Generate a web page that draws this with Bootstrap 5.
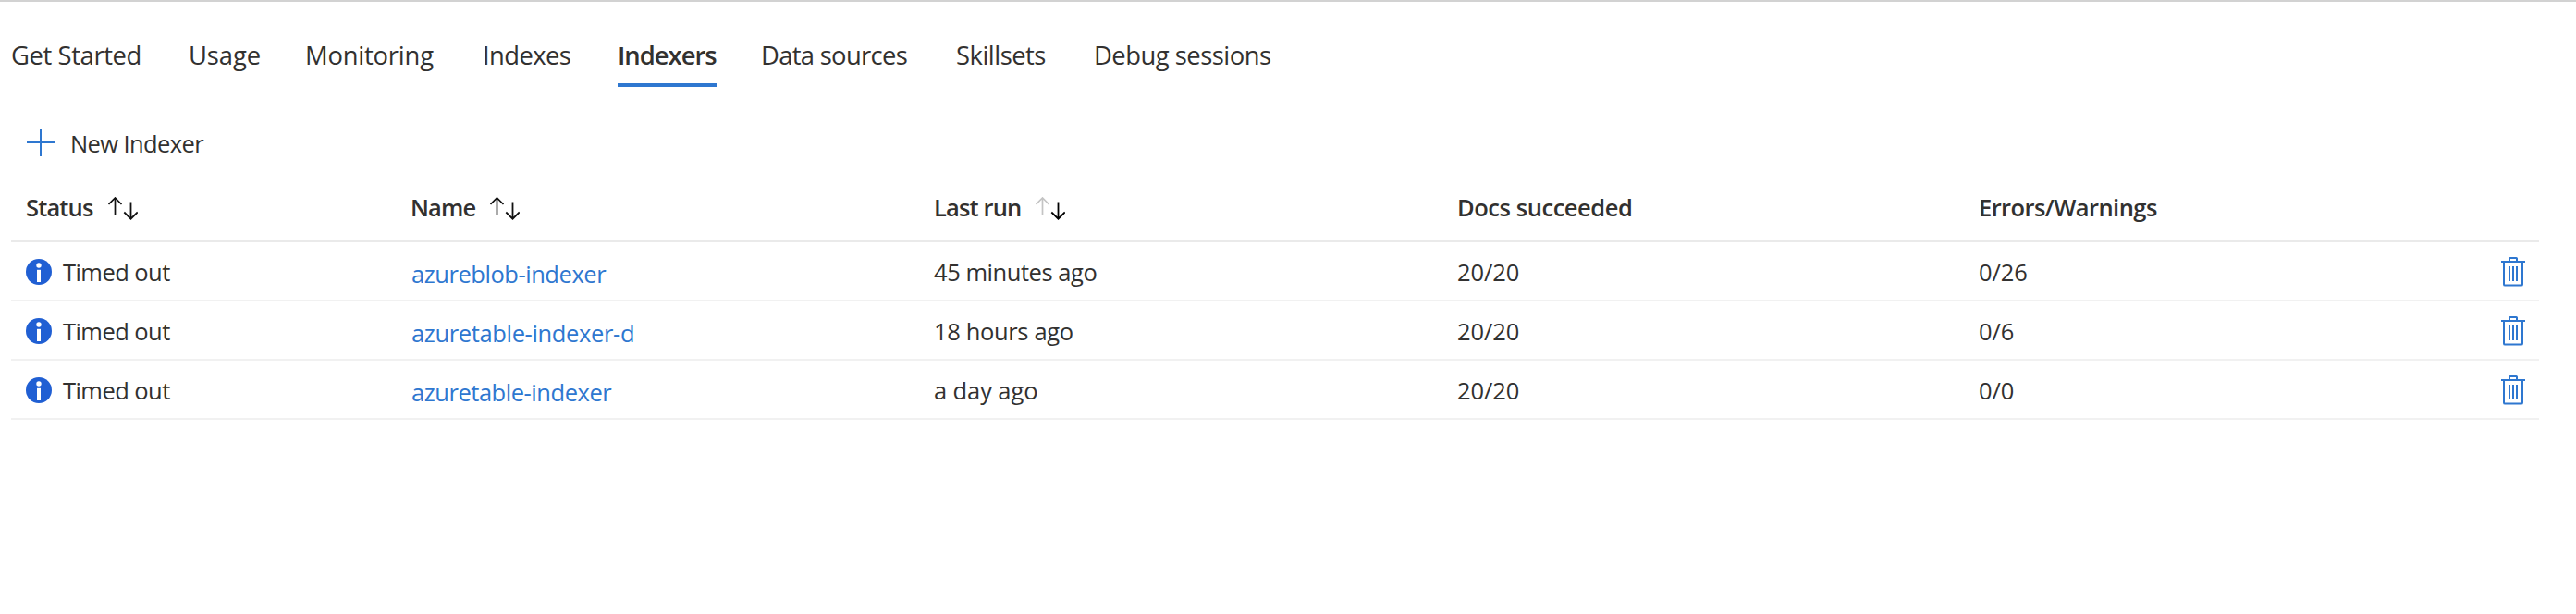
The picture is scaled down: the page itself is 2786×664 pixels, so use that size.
<!DOCTYPE html>
<html lang="en">
<head>
<meta charset="utf-8">
<title>Search service - Indexers</title>
<link href="https://cdn.jsdelivr.net/npm/bootstrap@5.3.0/dist/css/bootstrap.min.css" rel="stylesheet">
<style>
body{font-family:"Open Sans","Noto Sans",sans-serif;font-size:25.5px;line-height:36px;letter-spacing:-.45px;color:#323130;background:#fff;border-top:2px solid #d2d2d2;white-space:nowrap}
svg{display:block;flex:none}
.svc-tabs{padding:38px 0 0 12px;font-size:27.4px;display:grid;grid-template-columns:192px 126px 192px 145px 156px 211px 149px auto;justify-content:start}
.svc-tabs .nav-link{padding:0;height:54px;line-height:39px;color:#323130;letter-spacing:var(--ls)}
.svc-tabs .nav-link.active{font-weight:600;width:107px;margin-left:1px;border-bottom:4px solid #2e77d0}
.svc-toolbar{height:60px;margin-top:30px;padding-left:29px;gap:17px;letter-spacing:-.6px}
.svc-toolbar button{color:inherit;font:inherit;letter-spacing:inherit;padding:2px 0 0}
.indexers{width:2734px;margin:2px 0 0 12px;table-layout:fixed;border-collapse:separate;border-spacing:0}
.indexers th,.indexers td{padding:2px 15px 0 16px;vertical-align:middle;border-bottom:2px solid #f1f1f1}
.indexers th{height:76px;font-weight:600;border-color:#eaeaea}
.indexers td{height:64px}
.indexers td:nth-child(2){padding:6px 0 0 17px}
.indexers td:last-child{padding-top:1px}
.indexers a{color:#2e77d0;text-decoration:none}
.status-cell{gap:12px}
.sort-icon{margin:3px 0 0 16px}
.ls-0{letter-spacing:-.1px}
.ls-1{letter-spacing:-.35px}
.ls-2{letter-spacing:-.56px}
.ls-3{letter-spacing:-.85px}
</style>
</head>
<body>
<svg class="d-none">
  <symbol id="info" viewBox="0 0 28 28"><circle cx="14" cy="14" r="14" fill="#205fd3"/><circle cx="14" cy="7" r="2.7" fill="#fff"/><path d="M12 11.800h4V25h-4z" fill="#fff"/></symbol>
  <symbol id="trash" viewBox="0 0 26 32"><g fill="none" stroke="#2e77d0" stroke-width="2"><path d="M0 5h26M9 5V1.600q0-.6.6-.6h6.800q.6 0 .6.6V5M3 5v24.400q0 1.200 1.200 1.200h17.600q1.200 0 1.200-1.200V5M9 10v16M13 10v16M17 10v16"/></g></symbol>
  <symbol id="up" viewBox="0 0 32 26"><path d="M7.500 19V1M.5 8l7-7 7 7" fill="none" stroke="currentColor" stroke-width="1.700"/></symbol>
  <symbol id="down" viewBox="0 0 32 26"><path d="M24.500 5.500v18M17.300 16.500l7.200 7.200 7.200-7.200" fill="none" stroke="currentColor" stroke-width="1.800"/></symbol>
</svg>
<nav class="nav svc-tabs">
  <a class="nav-link" style="--ls:-.4px">Get Started</a>
  <a class="nav-link" style="--ls:-.1px">Usage</a>
  <a class="nav-link" style="--ls:-.2px">Monitoring</a>
  <a class="nav-link" style="--ls:-.6px">Indexes</a>
  <a class="nav-link active" style="--ls:-1px">Indexers</a>
  <a class="nav-link" style="--ls:-.69px">Data sources</a>
  <a class="nav-link" style="--ls:-.5px">Skillsets</a>
  <a class="nav-link" style="--ls:-.5px">Debug sessions</a>
</nav>
<div class="svc-toolbar d-flex align-items-center">
  <svg width="30" height="30"><path d="M0 15h30M15 0v30" stroke="#2e77d0" stroke-width="2"/></svg>
  <button class="btn border-0">New Indexer</button>
</div>
<table class="indexers">
  <colgroup><col style="width:416px"><col style="width:566px"><col style="width:566px"><col style="width:564px"><col style="width:516px"><col></colgroup>
  <thead>
    <tr>
      <th><div class="d-flex align-items-center"><span class="ls-3">Status</span><svg class="sort-icon" width="32" height="26" color="#111"><use href="#up"/><use href="#down"/></svg></div></th>
      <th><div class="d-flex align-items-center"><span class="ls-3">Name</span><svg class="sort-icon" width="32" height="26" color="#111"><use href="#up"/><use href="#down"/></svg></div></th>
      <th><div class="d-flex align-items-center"><span class="ls-3">Last run</span><svg class="sort-icon" width="32" height="26" color="#000"><use href="#up" color="#c4c4c4"/><use href="#down"/></svg></div></th>
      <th>Docs succeeded</th>
      <th class="ls-2">Errors/Warnings</th>
      <th></th>
    </tr>
  </thead>
  <tbody>
    <tr>
      <td><div class="status-cell d-flex align-items-center"><svg width="28" height="28"><use href="#info"/></svg><span class="ls-2">Timed out</span></div></td>
      <td><a href="#">azureblob-indexer</a></td>
      <td>45 minutes ago</td><td class="ls-0">20/20</td><td class="ls-0">0/26</td>
      <td><svg class="ms-auto" width="26" height="32"><use href="#trash"/></svg></td>
    </tr>
    <tr>
      <td><div class="status-cell d-flex align-items-center"><svg width="28" height="28"><use href="#info"/></svg><span class="ls-2">Timed out</span></div></td>
      <td class="ls-1"><a href="#">azuretable-indexer-d</a></td>
      <td class="ls-1">18 hours ago</td><td class="ls-0">20/20</td><td class="ls-0">0/6</td>
      <td><svg class="ms-auto" width="26" height="32"><use href="#trash"/></svg></td>
    </tr>
    <tr>
      <td><div class="status-cell d-flex align-items-center"><svg width="28" height="28"><use href="#info"/></svg><span class="ls-2">Timed out</span></div></td>
      <td><a href="#">azuretable-indexer</a></td>
      <td class="ls-0">a day ago</td><td class="ls-0">20/20</td><td class="ls-0">0/0</td>
      <td><svg class="ms-auto" width="26" height="32"><use href="#trash"/></svg></td>
    </tr>
  </tbody>
</table>
<script src="https://cdn.jsdelivr.net/npm/bootstrap@5.3.0/dist/js/bootstrap.bundle.min.js"></script>
</body>
</html>
